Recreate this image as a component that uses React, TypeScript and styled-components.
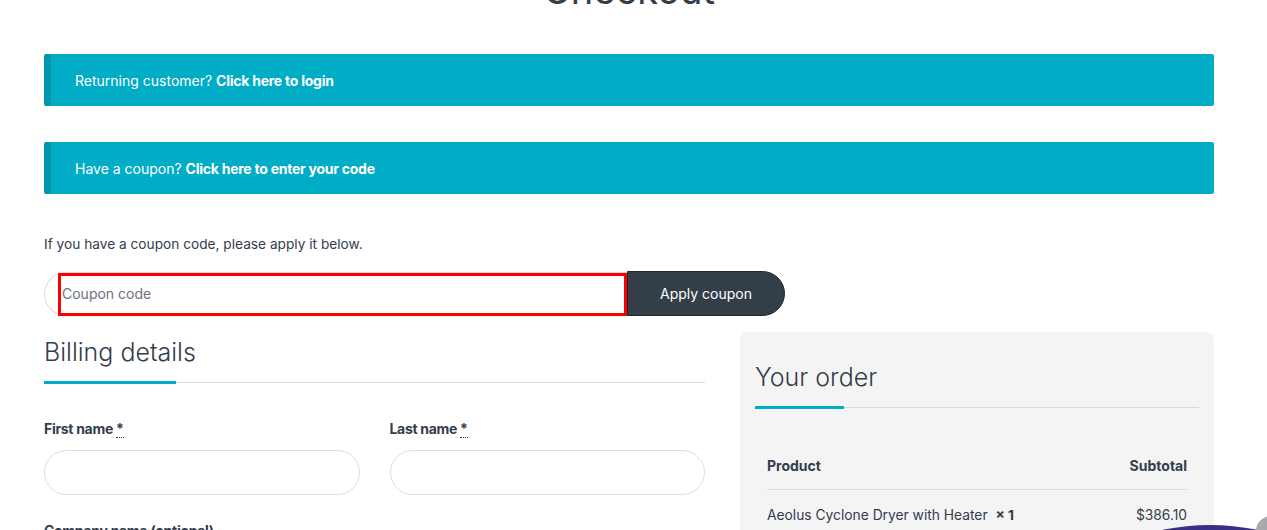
import React from "react";
import styled, { createGlobalStyle } from "styled-components";

const Global = createGlobalStyle`
  html, body { margin: 0; padding: 0; background: #fff; overflow: hidden; }
  body { font-family: Inter, "Noto Sans", Arial, sans-serif; color: #333d4c; }
  * { box-sizing: border-box; }
`;

const Page = styled.div`
  width: 1267px;
  height: 530px;
  position: relative;
  overflow: hidden;
  padding: 0 53px 0 44px;
`;

const Title = styled.h1`
  margin: -34px 0 0;
  height: 49px;
  text-align: center;
  font-size: 38px;
  line-height: 48px;
  font-weight: 400;
  color: #333d4c;
`;

const Notice = styled.div<{ $mt: number }>`
  margin-top: ${(p) => p.$mt}px;
  height: 52px;
  background: #00acc6;
  border-left: 7px solid #0096ab;
  border-radius: 2px;
  color: #fff;
  font-size: 14px;
  display: flex;
  align-items: center;
  padding-left: 24px;
  b { font-weight: 700; letter-spacing: -0.25px; }
`;

const Hint = styled.p`
  margin: 40px 0 0;
  font-size: 13.7px;
  line-height: 20px;
  color: #333d4c;
`;

const CouponRow = styled.div`
  margin-top: 17px;
  display: flex;
  align-items: center;
  width: 741px;
`;

const CouponField = styled.div`
  position: relative;
  flex: 1;
  height: 44px;
  border: 1px solid #dddddd;
  border-right: none;
  border-radius: 22px 0 0 22px;
  display: flex;
  align-items: center;
  padding-left: 17px;
  font-size: 14px;
  color: #6b7280;
`;

const FocusRing = styled.span`
  position: absolute;
  left: 13px;
  right: 0;
  top: 0;
  bottom: -1px;
  border: 3px solid #ff0000;
`;

const ApplyButton = styled.button`
  width: 158px;
  height: 45px;
  background: #343e48;
  color: #fff;
  border: 1px solid #1f262d;
  border-radius: 0 23px 23px 0;
  font-family: inherit;
  font-size: 14px;
  padding: 0;
`;

const Columns = styled.div`
  margin-top: 16px;
  display: grid;
  grid-template-columns: 661px 474px;
  column-gap: 35px;
`;

const Heading = styled.h3<{ $bar: number }>`
  position: relative;
  margin: 0;
  font-size: 25px;
  line-height: 40px;
  font-weight: 300;
  color: #333d4c;
  padding-bottom: 10px;
  border-bottom: 1px solid #d9d9d9;
  &::after {
    content: "";
    position: absolute;
    left: 0;
    bottom: -2px;
    width: ${(p) => p.$bar}px;
    height: 3px;
    background: #00acc6;
  }
`;

const FieldGrid = styled.div`
  margin-top: 36px;
  display: grid;
  grid-template-columns: 1fr 1fr;
  column-gap: 30px;
  row-gap: 26px;
`;

const Field = styled.div<{ $full?: boolean }>`
  grid-column: ${(p) => (p.$full ? "1 / -1" : "auto")};
  display: flex;
  flex-direction: column;
  gap: 11px;
`;

const Label = styled.label`
  font-size: 14px;
  line-height: 20px;
  font-weight: 700;
  letter-spacing: -0.3px;
  color: #333d4c;
  abbr {
    text-decoration: none;
    border-bottom: 1px dotted #333d4c;
    line-height: 14px;
  }
`;

const TextInput = styled.div`
  height: 45px;
  border: 1px solid #dddddd;
  border-radius: 23px;
  background: #fff;
`;

const OrderBox = styled.div`
  background: #f4f4f4;
  border-radius: 8px;
  padding: 25px 15px 0;
  height: 260px;
`;

const OrderTable = styled.div`
  margin-top: 34px;
  padding: 0 12px;
  font-size: 14px;
`;

const TRow = styled.div<{ $head?: boolean }>`
  display: flex;
  justify-content: space-between;
  align-items: center;
  height: ${(p) => (p.$head ? 48 : 50)}px;
  font-size: ${(p) => (p.$head ? 14 : 13.8)}px;
  font-weight: ${(p) => (p.$head ? 700 : 400)};
  border-bottom: ${(p) => (p.$head ? "1px solid #dcdcdc" : "none")};
  color: #333d4c;
  strong { font-weight: 700; margin-left: 4px; }
`;

const ChatBlob = styled.div`
  position: absolute;
  left: 1090px;
  top: 525px;
  width: 240px;
  height: 120px;
  border-radius: 50%;
  background: #3a2f86;
`;

const ChatKnob = styled.div`
  position: absolute;
  left: 1256px;
  top: 516px;
  width: 30px;
  height: 30px;
  border-radius: 50%;
  background: #a7a9ae;
`;

export default function App() {
  return (
    <>
      <Global />
      <Page>
        <Title>Checkout</Title>
        <Notice $mt={39}>
          Returning customer?&nbsp;<b>Click here to login</b>
        </Notice>
        <Notice $mt={36}>
          Have a coupon?&nbsp;<b>Click here to enter your code</b>
        </Notice>
        <Hint>If you have a coupon code, please apply it below.</Hint>
        <CouponRow>
          <CouponField>
            Coupon code
            <FocusRing />
          </CouponField>
          <ApplyButton>Apply coupon</ApplyButton>
        </CouponRow>
        <Columns>
          <div>
            <Heading $bar={132}>Billing details</Heading>
            <FieldGrid>
              <Field>
                <Label>
                  First name <abbr>*</abbr>
                </Label>
                <TextInput />
              </Field>
              <Field>
                <Label>
                  Last name <abbr>*</abbr>
                </Label>
                <TextInput />
              </Field>
              <Field $full>
                <Label>Company name (optional)</Label>
                <TextInput />
              </Field>
            </FieldGrid>
          </div>
          <OrderBox>
            <Heading $bar={89}>Your order</Heading>
            <OrderTable>
              <TRow $head>
                <span>Product</span>
                <span>Subtotal</span>
              </TRow>
              <TRow>
                <span>
                  Aeolus Cyclone Dryer with Heater&nbsp;<strong>× 1</strong>
                </span>
                <span>$386.10</span>
              </TRow>
            </OrderTable>
          </OrderBox>
        </Columns>
        <ChatBlob />
        <ChatKnob />
      </Page>
    </>
  );
}
